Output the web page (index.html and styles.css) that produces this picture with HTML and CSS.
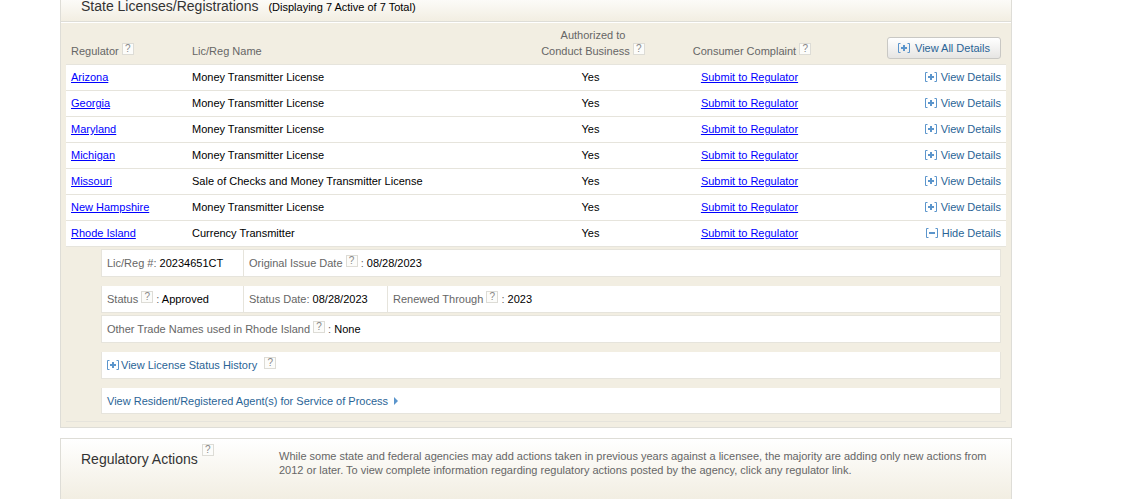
FILE: index.html
```html
<!DOCTYPE html>
<html lang="en">

<head>
    <meta charset="UTF-8">
    <meta name="viewport" content="width=device-width, initial-scale=1.0">
    <title>State Licenses/Registrations</title>
    <link rel="stylesheet" href="styles.css">
</head>

<body>
    <!-- shared icons -->
    <svg class="sprite" aria-hidden="true">
        <symbol id="plus" viewBox="0 0 12 10">
            <path class="bracket" d="M2.5 .5H.5V9.5H2.5M9.5 .5H11.5V9.5H9.5" />
            <path d="M5 2H7V4H9V6H7V8H5V6H3V4H5Z" />
        </symbol>
        <symbol id="minus" viewBox="0 0 12 10">
            <path class="bracket" d="M2.5 .5H.5V9.5H2.5M9.5 .5H11.5V9.5H9.5" />
            <path d="M3 4H9V6H3Z" />
        </symbol>
    </svg>

    <main>
        <section class="panel">
            <div class="panel-title">
                <h2>State Licenses/Registrations</h2>
                <span class="count">(Displaying 7 Active of 7 Total)</span>
            </div>
            <div class="panel-body">
                <table class="licenses">
                    <thead>
                        <tr>
                            <th class="col-regulator">Regulator <button type="button" class="help">?</button></th>
                            <th class="col-name">Lic/Reg Name</th>
                            <th class="col-auth center">Authorized to<br>Conduct Business <button type="button" class="help">?</button></th>
                            <th class="col-complaint center">Consumer Complaint <button type="button" class="help">?</button></th>
                            <th class="right"><button type="button" class="view-all"><svg class="icon"><use href="#plus" /></svg>View All Details</button></th>
                        </tr>
                    </thead>
                    <tbody>
                        <tr>
                            <td><a href="#">Arizona</a></td>
                            <td>Money Transmitter License</td>
                            <td class="center">Yes</td>
                            <td class="center"><a href="#">Submit to Regulator</a></td>
                            <td class="right"><a href="#" class="toggle"><svg class="icon"><use href="#plus" /></svg>View Details</a></td>
                        </tr>
                        <tr>
                            <td><a href="#">Georgia</a></td>
                            <td>Money Transmitter License</td>
                            <td class="center">Yes</td>
                            <td class="center"><a href="#">Submit to Regulator</a></td>
                            <td class="right"><a href="#" class="toggle"><svg class="icon"><use href="#plus" /></svg>View Details</a></td>
                        </tr>
                        <tr>
                            <td><a href="#">Maryland</a></td>
                            <td>Money Transmitter License</td>
                            <td class="center">Yes</td>
                            <td class="center"><a href="#">Submit to Regulator</a></td>
                            <td class="right"><a href="#" class="toggle"><svg class="icon"><use href="#plus" /></svg>View Details</a></td>
                        </tr>
                        <tr>
                            <td><a href="#">Michigan</a></td>
                            <td>Money Transmitter License</td>
                            <td class="center">Yes</td>
                            <td class="center"><a href="#">Submit to Regulator</a></td>
                            <td class="right"><a href="#" class="toggle"><svg class="icon"><use href="#plus" /></svg>View Details</a></td>
                        </tr>
                        <tr>
                            <td><a href="#">Missouri</a></td>
                            <td>Sale of Checks and Money Transmitter License</td>
                            <td class="center">Yes</td>
                            <td class="center"><a href="#">Submit to Regulator</a></td>
                            <td class="right"><a href="#" class="toggle"><svg class="icon"><use href="#plus" /></svg>View Details</a></td>
                        </tr>
                        <tr>
                            <td><a href="#">New Hampshire</a></td>
                            <td>Money Transmitter License</td>
                            <td class="center">Yes</td>
                            <td class="center"><a href="#">Submit to Regulator</a></td>
                            <td class="right"><a href="#" class="toggle"><svg class="icon"><use href="#plus" /></svg>View Details</a></td>
                        </tr>
                        <tr>
                            <td><a href="#">Rhode Island</a></td>
                            <td>Currency Transmitter</td>
                            <td class="center">Yes</td>
                            <td class="center"><a href="#">Submit to Regulator</a></td>
                            <td class="right"><a href="#" class="toggle"><svg class="icon"><use href="#minus" /></svg>Hide Details</a></td>
                        </tr>
                        <tr class="details">
                            <td colspan="5">
                                <div class="box spaced">
                                    <div class="cell first">Lic/Reg #: <b>20234651CT</b></div>
                                    <div class="cell">Original Issue Date <button type="button" class="help">?</button> : <b>08/28/2023</b></div>
                                </div>
                                <div class="box open">
                                    <div class="cell first">Status <button type="button" class="help">?</button> : <b>Approved</b></div>
                                    <div class="cell second">Status Date: <b>08/28/2023</b></div>
                                    <div class="cell">Renewed Through <button type="button" class="help">?</button> : <b>2023</b></div>
                                </div>
                                <div class="box spaced">
                                    <div class="cell">Other Trade Names used in Rhode Island <button type="button" class="help">?</button> : <b>None</b></div>
                                </div>
                                <div class="box open spaced">
                                    <div class="cell history"><a href="#" class="toggle"><svg class="icon"><use href="#plus" /></svg>View License Status History</a> <button type="button" class="help">?</button></div>
                                </div>
                                <div class="box open">
                                    <div class="cell"><a href="#" class="toggle">View Resident/Registered Agent(s) for Service of Process<span class="arrow"></span></a></div>
                                </div>
                            </td>
                        </tr>
                    </tbody>
                </table>
            </div>
        </section>

        <section class="panel actions">
            <div class="actions-title">
                <h2>Regulatory Actions</h2>
                <button type="button" class="help">?</button>
            </div>
            <p>While some state and federal agencies may add actions taken in previous years against a licensee, the majority are adding only new actions from 2012 or later. To view complete information regarding regulatory actions posted by the agency, click any regulator link.</p>
        </section>
    </main>
</body>

</html>
```
FILE: styles.css
```css
* {
    box-sizing: border-box;
}

body {
    margin: 0;
    background: #ffffff;
    color: #000000;
    font-family: Arial, "Liberation Sans", sans-serif;
    font-size: 11px;
    line-height: 16px;
}

h2,
p {
    margin: 0;
}

h2 {
    color: #333333;
    font-size: 14px;
    font-weight: normal;
}

b {
    color: #000000;
    font-weight: normal;
}

a {
    color: #0000ff;
}

.sprite {
    display: none;
}

main {
    max-width: 952px;
    margin-left: 60px;
}

.panel {
    margin-bottom: 10px;
    border: 1px solid #deddd7;
    background: #f2eee2;
}

/* first panel runs up to the top edge of the page */
.panel:first-child {
    border-top: none;
}

.panel-title {
    display: flex;
    align-items: baseline;
    gap: 10px;
    padding: 0 20px 8px 20px;
    line-height: 12px;
    border-bottom: 1px solid #deddd7;
    background: linear-gradient(#fcfbf8, #f2eee2);
}

.panel-body {
    border-top: 1px solid #ffffff;
    padding: 0 5px 5px 5px;
}

.licenses {
    width: 100%;
    border-collapse: collapse;
    table-layout: fixed;
}

.licenses th {
    height: 41px;
    padding: 0 5px 5px 5px;
    color: #666666;
    font-weight: normal;
    text-align: left;
    vertical-align: bottom;
    border-bottom: 1px solid #e6e4dc;
}

.licenses td {
    height: 26px;
    padding: 0 5px;
    background: #ffffff;
    border-bottom: 1px solid #e6e4dc;
}

.col-regulator {
    width: 121px;
}

.col-name {
    width: 342px;
}

.col-auth {
    width: 123px;
}

.col-complaint {
    width: 195px;
}

.licenses .center {
    text-align: center;
}

.licenses th.center {
    padding-left: 10px;
}

.licenses .right {
    text-align: right;
}

.help {
    width: 12px;
    height: 12px;
    padding: 0;
    border: 1px solid #dddcd6;
    background: #fcfcfa;
    color: #888888;
    font: 10px/10px "Liberation Sans", sans-serif;
    text-align: center;
    vertical-align: 3px;
}

.icon {
    width: 12px;
    height: 10px;
    margin-right: 4px;
    fill: #5b95cc;
    vertical-align: -1px;
}

.bracket {
    fill: none;
    stroke: #5b95cc;
}

.toggle {
    color: #2a6496;
    text-decoration: none;
}

.view-all {
    height: 22px;
    padding: 0 10px;
    border: 1px solid #c9c8c4;
    border-radius: 3px;
    background: linear-gradient(#ffffff, #e6e5e3);
    color: #2a6496;
    font: inherit;
}

.view-all .icon {
    margin-right: 5px;
}

.licenses .details td {
    padding: 2px 5px 7px 35px;
    background: #f2eee2;
}

.box {
    display: flex;
    margin-bottom: 2px;
    border: 1px solid #e6e4dc;
    background: #ffffff;
}

.box.spaced {
    margin-bottom: 9px;
}

.box.open {
    border-top: none;
}

.box:last-child {
    margin-bottom: 0;
}

.cell {
    padding: 5px;
    color: #666666;
}

.box:last-child .cell {
    padding-bottom: 4px;
}

.cell.first,
.cell.second {
    border-right: 1px solid #e6e4dc;
}

.cell.first {
    width: 142px;
}

.cell.second {
    width: 144px;
}

.history .icon {
    margin-right: 2px;
}

.history .help {
    margin-left: 4px;
}

.arrow {
    display: inline-block;
    margin-left: 6px;
    border: 4px solid transparent;
    border-left-color: #5b95cc;
    border-right: none;
}

.actions {
    display: flex;
    min-height: 61px;
    margin-bottom: 0;
    padding: 5px 20px;
    border-bottom: none;
    background: linear-gradient(#ffffff, #f2eee2);
}

.actions-title {
    display: flex;
    align-items: flex-start;
    gap: 4px;
    width: 198px;
    flex-shrink: 0;
}

.actions h2 {
    padding-top: 7px;
}

.actions p {
    padding-top: 5px;
    color: #666666;
    line-height: 14px;
}
```
